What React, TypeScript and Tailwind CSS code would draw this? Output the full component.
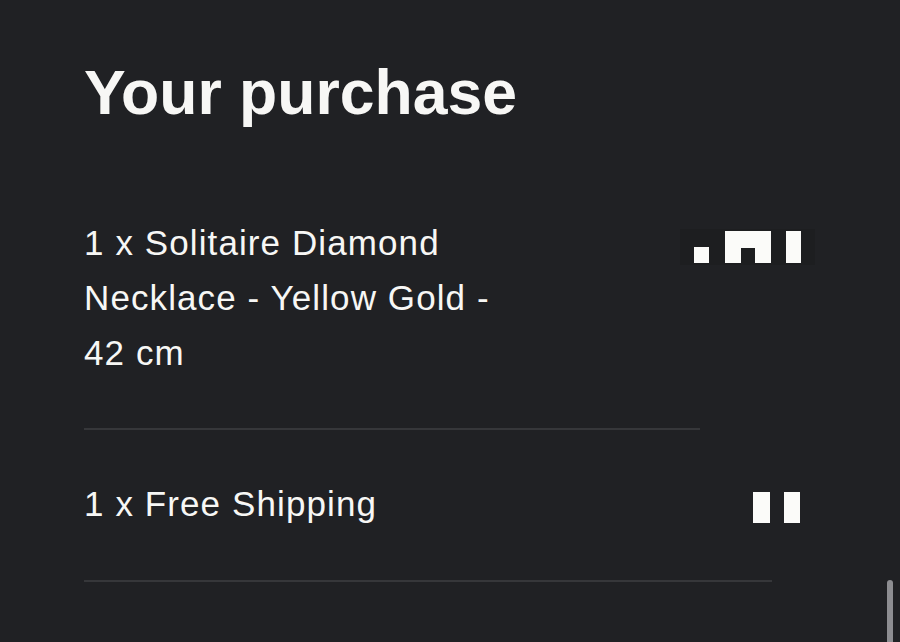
export default function App() {
  return (
    <div className="relative h-[642px] w-[900px] overflow-hidden bg-[#202124] font-['Liberation_Sans',Arial,sans-serif] text-[#f7f7f5]">
      <div className="pl-[84px] pt-[56px]">
        {/* Heading */}
        <h1 className="text-[62.5px] font-bold leading-[72px]">Your purchase</h1>

        {/* Item 1 */}
        <div className="mt-[87px] flex w-[716px] justify-between">
          <p className="w-[440px] text-[35px] leading-[55px] tracking-[1.1px]">
            1 x Solitaire Diamond Necklace - Yellow Gold - 42 cm
          </p>
          <div className="-mr-[15px] mt-[14px] flex h-[36px] items-center bg-[#1d1e20] px-[14px]">
            <div className="flex h-[32px] items-end">
              <div className="h-[16px] w-[15px] bg-[#fbfbf9]" />
              <div className="ml-[16px] flex h-[32px] w-[46px] flex-col">
                <div className="h-[17px] bg-[#fbfbf9]" />
                <div className="flex flex-1 justify-between">
                  <div className="w-[16px] bg-[#fbfbf9]" />
                  <div className="w-[16px] bg-[#fbfbf9]" />
                </div>
              </div>
              <div className="ml-[15px] h-[32px] w-[15px] bg-[#fbfbf9]" />
            </div>
          </div>
        </div>
        <div className="mt-[48px] h-[2px] w-[616px] bg-[#36373a]" />

        {/* Item 2 */}
        <div className="mt-[46px] flex w-[716px] justify-between">
          <p className="text-[35px] leading-[55px] tracking-[1.1px]">1 x Free Shipping</p>
          <div className="mt-[16px] flex h-[31px] gap-[14px]">
            <div className="w-[17px] bg-[#fbfbf9]" />
            <div className="w-[16px] bg-[#fbfbf9]" />
          </div>
        </div>
        <div className="mt-[49px] h-[2px] w-[688px] bg-[#36373a]" />
      </div>

      {/* scrollbar */}
      <div className="absolute left-[887px] top-[580px] h-[80px] w-[6px] rounded-full bg-[#8d8d91]" />
    </div>
  );
}
